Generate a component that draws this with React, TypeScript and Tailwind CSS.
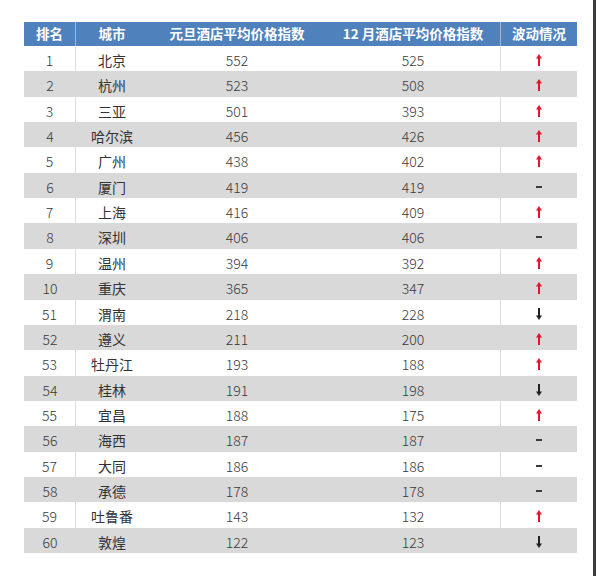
import React from "react";

type Trend = "up" | "down" | "eq";
const rows: [number, string, number, number, Trend][] = [
  [1, "北京", 552, 525, "up"],
  [2, "杭州", 523, 508, "up"],
  [3, "三亚", 501, 393, "up"],
  [4, "哈尔滨", 456, 426, "up"],
  [5, "广州", 438, 402, "up"],
  [6, "厦门", 419, 419, "eq"],
  [7, "上海", 416, 409, "up"],
  [8, "深圳", 406, 406, "eq"],
  [9, "温州", 394, 392, "up"],
  [10, "重庆", 365, 347, "up"],
  [51, "渭南", 218, 228, "down"],
  [52, "遵义", 211, 200, "up"],
  [53, "牡丹江", 193, 188, "up"],
  [54, "桂林", 191, 198, "down"],
  [55, "宜昌", 188, 175, "up"],
  [56, "海西", 187, 187, "eq"],
  [57, "大同", 186, 186, "eq"],
  [58, "承德", 178, 178, "eq"],
  [59, "吐鲁番", 143, 132, "up"],
  [60, "敦煌", 122, 123, "down"],
];

function TrendIcon({ t }: { t: Trend }) {
  if (t === "eq") {
    return <span className="block w-[6px] h-[2px] bg-[#3a3a3a]" />;
  }
  const color = t === "up" ? "#e3142c" : "#222";
  return (
    <svg width="6" height="12" viewBox="0 0 6 12" className={t === "down" ? "rotate-180" : ""}>
      <polygon points="3,0 6,4.6 0,4.6" fill={color} />
      <rect x="2" y="3.5" width="2" height="8.5" fill={color} />
    </svg>
  );
}

const PITCH = 25.35;

export default function App() {
  return (
    <div
      className="w-[596px] h-[576px] bg-white border-r-[3px] border-[#3c3c3c] pt-[22px] pl-[24px]"
      style={{ fontFamily: '"Noto Sans CJK SC", "Noto Sans", sans-serif' }}
    >
      <div className="w-[553px]">
        <div className="grid grid-cols-[52px_72px_178px_174px_77px] h-[24px] bg-[#4f81bd] text-white font-bold text-[13.5px] leading-none items-stretch">
          <div className="flex items-center justify-center border-r border-[#9db8da]">排名</div>
          <div className="flex items-center justify-center">城市</div>
          <div className="flex items-center justify-center">元旦酒店平均价格指数</div>
          <div className="flex items-center justify-center">12 月酒店平均价格指数</div>
          <div className="flex items-center justify-center border-l border-[#9db8da]">波动情况</div>
        </div>
        {rows.map(([rank, city, a, b, t], i) => {
          const gray = i % 2 === 1;
          const h = Math.round((i + 1) * PITCH) - Math.round(i * PITCH);
          return (
            <div
              key={rank}
              style={{ height: h }}
              className={
                "grid grid-cols-[52px_72px_178px_174px_77px] text-[14px] font-light leading-none text-[#383838] items-stretch " +
                (gray ? "bg-[#d9d9d9]" : "bg-white")
              }
            >
              <div className={"flex items-center justify-center pt-[2px] " + (gray ? "" : "border-r border-[#dcdcdc]")}>{rank}</div>
              <div className="flex items-center justify-center pt-[2px] font-normal text-[#333]">{city}</div>
              <div className="flex items-center justify-center pt-[2px]">{a}</div>
              <div className="flex items-center justify-center pt-[2px]">{b}</div>
              <div className={"flex items-center justify-center pt-[2px] " + (gray ? "" : "border-l border-[#dcdcdc]")}>
                <TrendIcon t={t} />
              </div>
            </div>
          );
        })}
      </div>
    </div>
  );
}
